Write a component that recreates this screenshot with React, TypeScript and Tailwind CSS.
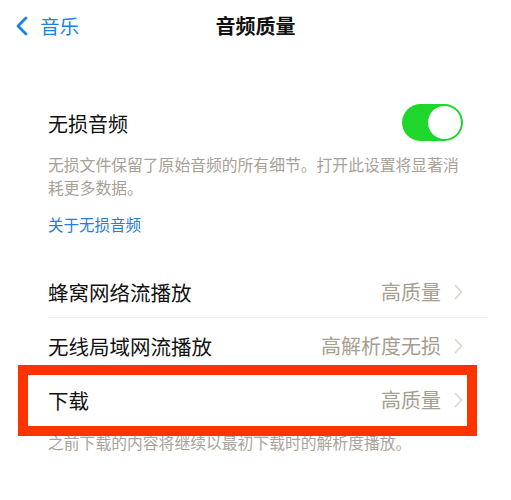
import React from "react";

function Chevron() {
  return (
    <svg width="9" height="16" viewBox="0 0 9 16" className="ml-[13px]">
      <polyline points="1.5,1.5 7.5,8 1.5,14.5" fill="none" stroke="#dcd4c4" strokeWidth="1.6" strokeLinecap="round" strokeLinejoin="round" />
    </svg>
  );
}

function Row({ label, value, divider }: { label: string; value: string; divider?: boolean }) {
  return (
    <div className="relative flex h-[54px] items-center pl-[48px] pr-[48px]">
      <span className="flex-1 text-[20.5px] text-[#111]">{label}</span>
      <span className="text-[20px] text-[#a69e8f]">{value}</span>
      <Chevron />
      {divider && <div className="absolute bottom-[1px] left-[48px] right-[24px] h-px bg-[#f1eee9]" />}
    </div>
  );
}

export default function App() {
  return (
    <div className="h-[500px] w-[511px] bg-white" style={{ fontFamily: '"Noto Sans CJK SC", "Noto Sans", sans-serif' }}>
      <div className="relative flex h-[52px] items-center">
        <div className="flex items-center pl-[15px] text-[#1c80e4]">
          <svg width="14" height="20" viewBox="0 0 14 20">
            <polyline points="11,2 3,10 11,18" fill="none" stroke="#1c80e4" strokeWidth="2.8" strokeLinecap="round" strokeLinejoin="round" />
          </svg>
          <span className="ml-[11px] text-[19.5px]">音乐</span>
        </div>
        <div className="absolute left-0 right-0 text-center text-[20px] font-bold text-[#111]">音频质量</div>
      </div>

      <div className="mt-[50px] flex h-[40px] items-center justify-between pl-[48px] pr-[48px]">
        <span className="mt-[3px] text-[20px] text-[#111]">无损音频</span>
        <div className="relative h-[37px] w-[61px] rounded-full bg-[#1fd62a]">
          <div className="absolute right-[2px] top-[2px] h-[33px] w-[33px] rounded-full bg-white" />
        </div>
      </div>

      <p className="mt-[11px] w-[463px] pl-[48px] text-[15.8px] leading-[23px] text-[#a8a196]">
        无损文件保留了原始音频的所有细节。打开此设置将显著消耗更多数据。
      </p>
      <p className="mt-[14px] pl-[48px] text-[15.5px] leading-[23px] text-[#1c80e4]">关于无损音频</p>

      <div className="mt-[29px]">
        <Row label="蜂窝网络流播放" value="高质量" divider />
        <Row label="无线局域网流播放" value="高解析度无损" />
        <div className="relative">
          <Row label="下载" value="高质量" />
          <div className="absolute left-[18px] top-[-8px] h-[71px] w-[459px] border-[10px] border-[#ff3300]" />
        </div>
      </div>
      <p className="mt-[6px] pl-[48px] text-[15.8px] leading-[20px] text-[#aaa39a]">之前下载的内容将继续以最初下载时的解析度播放。</p>
    </div>
  );
}
